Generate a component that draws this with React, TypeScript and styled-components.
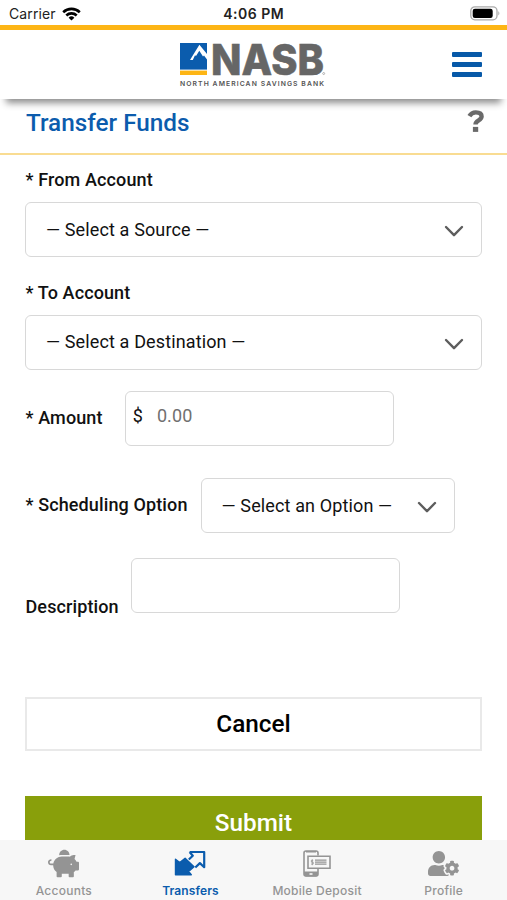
import React from "react";
import styled, { createGlobalStyle } from "styled-components";
import { FaPiggyBank, FaUserCog } from "react-icons/fa";

const GlobalStyle = createGlobalStyle`
  * { box-sizing: border-box; }
  body { margin: 0; background: #fff; }
  button, input { font: inherit; letter-spacing: inherit; }
`;

const Screen = styled.div`
  display: flex;
  flex-direction: column;
  width: 507px;
  height: 900px;
  overflow: hidden;
  background: #fff;
  color: #111;
  font-family: Roboto, sans-serif;
`;

const StatusBar = styled.div`
  display: grid;
  grid-template-columns: 1fr auto 1fr;
  align-items: center;
  flex: none;
  height: 25px;
  padding: 3px 6px 0 9px;
  font: 400 14px/20px Inter, sans-serif;
  color: #222;
`;

const Carrier = styled.div`
  display: flex;
  align-items: center;
  gap: 6px;
  letter-spacing: 0.1px;
`;

const Clock = styled.div`
  margin-right: 2.5px;
  font-weight: 600;
  letter-spacing: 0.5px;
`;

const BatteryIcon = styled.svg`
  display: block;
  justify-self: end;
  margin-top: -2px;
`;

const Header = styled.header`
  display: grid;
  grid-template-columns: 1fr auto 1fr;
  flex: none;
  height: 74px;
  padding: 0 25px;
  border-top: 5px solid #fdb515;
  background: #fff;
  box-shadow: 0 10px 7px -6px rgba(0, 0, 0, 0.45);
  z-index: 1;
`;

const Logo = styled.svg`
  display: block;
  grid-column: 2;
  margin-top: 10px;
  overflow: visible;
`;

const MenuButton = styled.button`
  display: flex;
  flex-direction: column;
  justify-content: space-between;
  justify-self: end;
  width: 30px;
  height: 25px;
  margin-top: 22px;
  padding: 0;
  border: 0;
  background: none;
`;

const MenuBar = styled.span`
  width: 30px;
  height: 5px;
  border-radius: 1px;
  background: #0759a8;
`;

const TitleBar = styled.div`
  display: flex;
  justify-content: space-between;
  flex: none;
  height: 56px;
  padding: 0 23px 0 26px;
  border-bottom: 2px solid #f9dc92;
`;

const Title = styled.h1`
  margin: 8.5px 0 0;
  font-size: 24.3px;
  font-weight: 500;
  line-height: 30px;
  color: #0c5cad;
`;

const HelpIcon = styled.svg`
  display: block;
  margin-top: 11px;
`;

const Form = styled.form`
  display: flex;
  flex-direction: column;
  flex: 1;
  min-height: 0;
  overflow: hidden;
  padding: 0 25px;
`;

const Label = styled.label<{ $top?: number }>`
  flex: none;
  padding: ${(p) => p.$top ?? 0}px 0 0 0.5px;
  font-size: 18px;
  font-weight: 500;
  line-height: 24px;
  letter-spacing: 0.12px;
  white-space: nowrap;
`;

const Row = styled.div<{ $gap: number; $top: number }>`
  display: flex;
  flex: none;
  gap: ${(p) => p.$gap}px;
  margin-top: ${(p) => p.$top}px;
`;

const Field = styled.div<{ $width?: number; $top?: number }>`
  display: flex;
  flex: none;
  align-items: center;
  justify-content: space-between;
  width: ${(p) => (p.$width ? `${p.$width}px` : "100%")};
  height: 55px;
  margin-top: ${(p) => p.$top ?? 0}px;
  padding: 0 17px 0 20px;
  border: 1.5px solid #d8d8d8;
  border-radius: 6px;
  font-size: 18px;
  line-height: 24px;
  letter-spacing: 0.13px;
  white-space: nowrap;
`;

const ChevronIcon = styled.svg`
  display: block;
  flex: none;
  margin-top: 4px;
`;

const MoneyField = styled(Field)`
  justify-content: flex-start;
  gap: 14px;
  padding: 0 7px 6px;
`;

const MoneyInput = styled.input`
  min-width: 0;
  flex: 1;
  padding: 0;
  border: 0;
  outline: 0;
  background: none;
  &::placeholder { color: #707070; opacity: 1; }
`;

const Button = styled.button<{ $primary?: boolean; $top: number }>`
  flex: none;
  width: 100%;
  height: 54px;
  margin-top: ${(p) => p.$top}px;
  padding: 0;
  border: ${(p) => (p.$primary ? "0" : "2px solid #e9e9e9")};
  background: ${(p) => (p.$primary ? "#899f0b" : "#fff")};
  color: ${(p) => (p.$primary ? "#fff" : "#000")};
  font-size: 24.3px;
  font-weight: 500;
`;

const TabBar = styled.nav`
  display: grid;
  grid-template-columns: repeat(4, 1fr);
  flex: none;
  height: 60px;
  padding-left: 0.6px;
  background: #f7f7f7;
`;

const Tab = styled.a<{ $active?: boolean }>`
  display: flex;
  flex-direction: column;
  align-items: center;
  padding-top: 7.5px;
  color: ${(p) => (p.$active ? "#0b5cad" : "#949494")};
  font: ${(p) => (p.$active ? 600 : 500)} 12px/16px Inter, sans-serif;
  letter-spacing: ${(p) => (p.$active ? 0.1 : 0.25)}px;
`;

const TabIcon = styled.div`
  display: flex;
  align-items: center;
  justify-content: center;
  height: 32px;
  margin-bottom: 3.5px;
`;

function Wifi() {
  return (
    <svg width="19" height="14" viewBox="0 0 19 14" fill="none" stroke="#000" strokeWidth="2.6">
      <path d="M1.2 5.2a12 12 0 0 1 16.6 0" />
      <path d="M4.3 8.5a7.5 7.5 0 0 1 10.4 0" />
      <path d="M9.5 13.6 6.6 10.7a4.1 4.1 0 0 1 5.8 0z" fill="#000" stroke="none" />
    </svg>
  );
}

function Chevron() {
  return (
    <ChevronIcon width="20" height="13" viewBox="0 0 20 13" fill="none" stroke="#5d5d5d" strokeWidth="2.4" strokeLinecap="round" strokeLinejoin="round">
      <path d="m2 2 8 8.2L18 2" />
    </ChevronIcon>
  );
}

function NasbLogo() {
  return (
    <Logo width="148" height="50" viewBox="0 0 148 50" role="img" aria-label="NASB">
      <path d="M0 3h27v26.6H0z" fill="#0b5cad" />
      <path d="M0 30.6h27V35H0z" fill="#fdb515" />
      <path d="M10 20 19.4 4.8 27 14v5.6l-3-4.1-1 1-3.7-5.8-3.1 5.1-1.3-.4-2.1 4.6z" fill="#fff" />
      <text x="31" y="34.6" fontFamily="Inter, sans-serif" fontWeight="800" fontSize="43" textLength="113" lengthAdjust="spacingAndGlyphs" fill="#666" stroke="#666" strokeWidth=".6">NASB</text>
      <text x="0" y="46" fontFamily="Inter, sans-serif" fontWeight="600" fontSize="6.8" textLength="144" fill="#555">NORTH AMERICAN SAVINGS BANK</text>
      <circle cx="143.7" cy="33.5" r="1" fill="none" stroke="#888" strokeWidth=".6" />
    </Logo>
  );
}

function TransferIcon() {
  return (
    <svg width="32" height="27" viewBox="0 0 32 27">
      <path d="M1.5 9.3v15.5h15.8l-2.7-3.3 5.4-4.8-8.9-8.5-5.3 4.4z" fill="currentColor" stroke="currentColor" strokeWidth="1.4" strokeLinejoin="round" />
      <path d="M15.6 2h14.6v15.2l-4.3-4.1-4.6 4.4M15.6 2l3.2 3.8-4 3.7" fill="none" stroke="currentColor" strokeWidth="2.2" strokeLinejoin="round" />
    </svg>
  );
}

function DepositIcon() {
  return (
    <svg width="28" height="28" viewBox="0 0 28 28" fill="none" stroke="currentColor">
      <path d="M15 5.5V3q0-2-2-2H3Q1 1 1 3v21q0 2 2 2h10q2 0 2-2v-5" strokeWidth="1.6" />
      <path d="M1 21.5h14v3q0 2-2 2H3q-2 0-2-2zM3 1h10v1.5H3z" fill="currentColor" stroke="none" />
      <path d="M6.5 24h3" stroke="#f7f7f7" strokeWidth="1.6" />
      <path d="M5 6.2h22v12H5z" strokeWidth="1.6" />
      <path d="M12 10.2h11.5M12 12.2h11.5M12 14.2h11.5" strokeWidth="1.3" />
      <path d="M10.2 10.3H8.4v1.8h1.8v2H8.2M9.3 9.3v5.9" strokeWidth=".8" />
    </svg>
  );
}

export default function App() {
  return (
    <>
      <GlobalStyle />
      <Screen>
        <StatusBar>
          <Carrier>Carrier <Wifi /></Carrier>
          <Clock>4:06 PM</Clock>
          <BatteryIcon width="31" height="15" viewBox="0 0 31 15">
            <rect x=".8" y=".8" width="26.2" height="13" rx="4" fill="#fff" stroke="#aaa" strokeWidth="1.3" />
            <rect x="2.7" y="2.7" width="20" height="9.2" rx="2.2" fill="#000" />
            <path d="M28.3 5q2.2 2.3 0 4.6z" fill="#aaa" />
          </BatteryIcon>
        </StatusBar>

        <Header>
          <NasbLogo />
          <MenuButton type="button" aria-label="Menu">
            <MenuBar /><MenuBar /><MenuBar />
          </MenuButton>
        </Header>

        <TitleBar>
          <Title>Transfer Funds</Title>
          <HelpIcon width="17" height="23" viewBox="0 0 17 23">
            <path d="M2.4 6.1Q4.5 2.4 8.8 2.4c3.5 0 5.8 1.5 5.8 4.2 0 4.2-6.1 3.4-6.1 8" fill="none" stroke="#6a6a6a" strokeWidth="4.4" />
            <path d="M5.9 16.9h5.3v5H5.9z" fill="#6a6a6a" />
          </HelpIcon>
        </TitleBar>

        <Form>
          <Label $top={13}>* From Account</Label>
          <Field $top={10}>— Select a Source —<Chevron /></Field>
          <Label $top={24}>* To Account</Label>
          <Field $top={9.5}>— Select a Destination —<Chevron /></Field>
          <Row $top={21.5} $gap={22}>
            <Label $top={15}>* Amount</Label>
            <MoneyField $width={269}>
              <span>$</span>
              <MoneyInput placeholder="0.00" aria-label="Amount" />
            </MoneyField>
          </Row>
          <Row $top={32} $gap={13}>
            <Label $top={15}>* Scheduling Option</Label>
            <Field $width={254}>— Select an Option —<Chevron /></Field>
          </Row>
          <Row $top={25} $gap={12.2}>
            <Label $top={36.5}>Description</Label>
            <Field $width={269} />
          </Row>
          <Button type="button" $top={78}>Cancel</Button>
          <Button type="button" $primary $top={45}>Submit</Button>
        </Form>

        <TabBar>
          <Tab><TabIcon><FaPiggyBank size={31} /></TabIcon>Accounts</Tab>
          <Tab $active><TabIcon><TransferIcon /></TabIcon>Transfers</Tab>
          <Tab><TabIcon><DepositIcon /></TabIcon>Mobile Deposit</Tab>
          <Tab><TabIcon><FaUserCog size={31} /></TabIcon>Profile</Tab>
        </TabBar>
      </Screen>
    </>
  );
}
